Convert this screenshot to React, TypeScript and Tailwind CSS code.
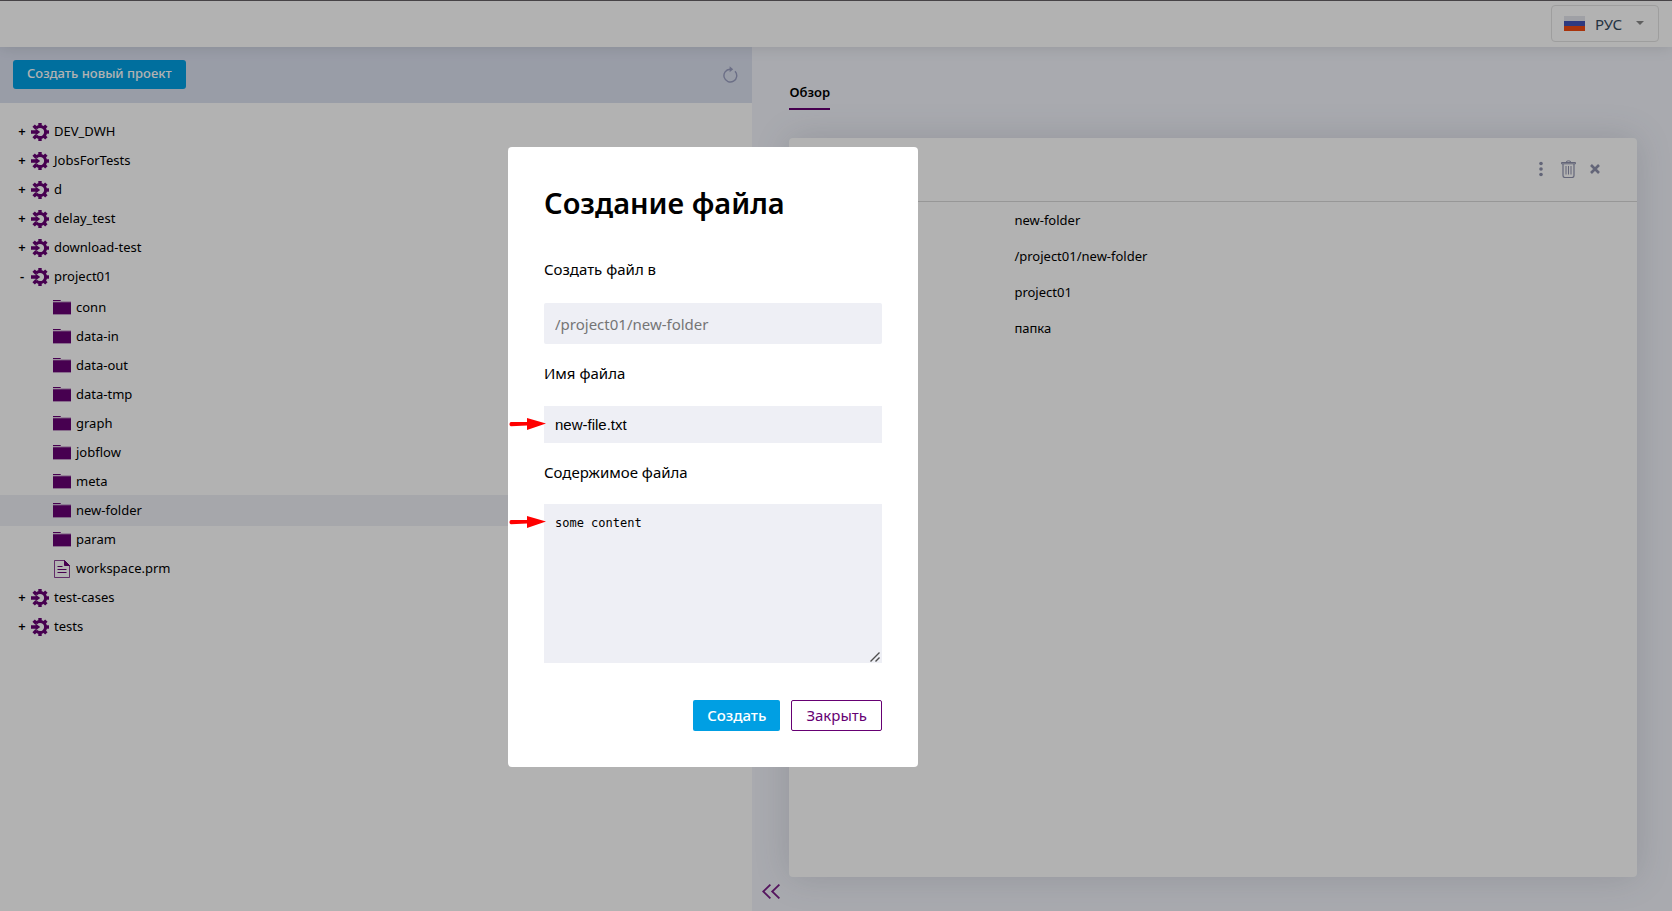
import { useState } from 'react';

type TreeNode = {
  name: string;
  kind: 'project' | 'folder' | 'file';
  children?: TreeNode[];
};

const tree: TreeNode[] = [
  { name: 'DEV_DWH', kind: 'project' },
  { name: 'JobsForTests', kind: 'project' },
  { name: 'd', kind: 'project' },
  { name: 'delay_test', kind: 'project' },
  { name: 'download-test', kind: 'project' },
  {
    name: 'project01',
    kind: 'project',
    children: [
      { name: 'conn', kind: 'folder' },
      { name: 'data-in', kind: 'folder' },
      { name: 'data-out', kind: 'folder' },
      { name: 'data-tmp', kind: 'folder' },
      { name: 'graph', kind: 'folder' },
      { name: 'jobflow', kind: 'folder' },
      { name: 'meta', kind: 'folder' },
      { name: 'new-folder', kind: 'folder' },
      { name: 'param', kind: 'folder' },
      { name: 'workspace.prm', kind: 'file' },
    ],
  },
  { name: 'test-cases', kind: 'project' },
  { name: 'tests', kind: 'project' },
];

const details = ['new-folder', '/project01/new-folder', 'project01', 'папка'];

function GearIcon() {
  return (
    <svg viewBox="0 0 18 18" className="size-[18px] shrink-0" fill="#660073" aria-hidden="true">
      {[0, 45, 90, 135, 180, 225, 315].map((a) => (
        <rect key={a} x="7.3" y="0" width="3.4" height="4" transform={`rotate(${a} 9 9)`} />
      ))}
      <path d="M5 5.1A5.6 5.6 0 1 1 5 12.9" fill="none" stroke="#660073" strokeWidth="3" />
      <path d="M0 7.3h4.6V5.4L9.2 9l-4.6 3.6v-1.9H0z" />
    </svg>
  );
}

function FolderIcon() {
  return (
    <svg viewBox="0 0 18 15" className="h-[15px] w-[18px] shrink-0" fill="#660073" aria-hidden="true">
      <path d="M0 0h7.4l.6 1H0zM0 2.3h18V14H0z" />
      <path d="M0 1h8v1.3H0z" opacity=".2" />
      <path d="M8 1.6h10v.7H8zM0 14h18v.8H0z" opacity=".5" />
    </svg>
  );
}

function FileIcon() {
  return (
    <svg viewBox="0 0 18 18" className="size-[18px] shrink-0" fill="none" stroke="#660073" aria-hidden="true">
      <path d="M11.5.5h-10v17h15V5.5z" strokeOpacity=".75" />
      <path d="M11.5.5v5h5z" fill="#660073" />
      <path d="M4.5 6.5h5M4.5 9.5h9M4.5 12.5h9" strokeWidth="1.2" />
    </svg>
  );
}

function TreeRow({ node, selected }: { node: TreeNode; selected?: boolean }) {
  if (node.kind === 'project') {
    return (
      <button type="button" className="flex h-[29px] w-full items-center pl-[18px] text-left">
        <span className="mr-[5px] w-2 text-center font-semibold">{node.children ? '-' : '+'}</span>
        <GearIcon />
        <span className="pl-[5px]">{node.name}</span>
      </button>
    );
  }
  return (
    <button
      type="button"
      className={
        selected
          ? '-my-px flex h-[31px] w-full items-center bg-[#eeeff5] pl-[53px] text-left'
          : 'flex h-[29px] w-full items-center pl-[53px] text-left'
      }
    >
      {node.kind === 'folder' ? <FolderIcon /> : <FileIcon />}
      <span className="pl-[5px]">{node.name}</span>
    </button>
  );
}

function Sidebar() {
  return (
    <aside className="flex w-[45%] shrink-0 flex-col bg-white">
      <div className="flex h-14 items-center justify-between bg-[#dce1f0] pr-[14px] pb-[2px] pl-[13px]">
        <button type="button" className="h-[29px] rounded-[3px] bg-[#009fe3] px-[14px] text-[13px] font-medium text-white">
          Создать новый проект
        </button>
        <button type="button" aria-label="Обновить">
          <svg viewBox="0 0 16 17" className="h-[17px] w-4" fill="none" stroke="#9a9fc0" strokeWidth="1.4" aria-hidden="true">
            <path d="M13 5.2A6.4 6.4 0 1 1 8 3.2" />
            <path d="M7.6.2 11.2 3.2 7.6 6.2z" fill="#9a9fc0" stroke="none" />
          </svg>
        </button>
      </div>
      <ul className="pt-[14px] text-[13px] text-black">
        {tree.map((node) => (
          <li key={node.name}>
            <TreeRow node={node} />
            {node.children && (
              <ul className="pt-[2px]">
                {node.children.map((child) => (
                  <li key={child.name}>
                    <TreeRow node={child} selected={child.name === 'new-folder'} />
                  </li>
                ))}
              </ul>
            )}
          </li>
        ))}
      </ul>
    </aside>
  );
}

function Overview() {
  return (
    <main className="relative flex grow flex-col pt-9 pr-[35px] pb-[34px] pl-[37px]">
      <nav className="flex">
        <a href="#overview" className="border-b-2 border-[#660073] pb-[7px] text-[13px] leading-[18px] font-semibold text-black">
          Обзор
        </a>
      </nav>
      <section className="mt-7 grow rounded-[4px] bg-white shadow-[0_0_36px_rgba(60,60,80,0.16)]">
        <div className="flex h-16 items-center justify-end gap-[18px] border-b border-[#d9d9d9] pr-[37px] pb-[2px] text-[#8e91ad]">
          <button type="button" aria-label="Ещё">
            <svg viewBox="0 0 4 16" className="h-4 w-1" fill="currentColor" aria-hidden="true">
              <circle cx="2" cy="2.5" r="1.8" />
              <circle cx="2" cy="8" r="1.8" />
              <circle cx="2" cy="13.5" r="1.8" />
            </svg>
          </button>
          <button type="button" aria-label="Удалить">
            <svg viewBox="0 0 15 18" className="h-[18px] w-[15px]" fill="none" stroke="currentColor" aria-hidden="true">
              <path d="M.5 2.5h14v1.3H.5zM5 2.2C5 .4 10 .4 10 2.2" />
              <path d="M2 4v11.5q0 2 2 2h7q2 0 2-2V4" strokeWidth="1.2" />
              <path d="M5 6v8.5M7.5 6v8.5M10 6v8.5" />
            </svg>
          </button>
          <button type="button" aria-label="Закрыть панель" className="-ml-1">
            <svg viewBox="0 0 10 10" className="size-[10px]" stroke="currentColor" strokeWidth="2.6" aria-hidden="true">
              <path d="m1 1 8 8M9 1 1 9" />
            </svg>
          </button>
        </div>
        <ul className="pt-px pl-[225px] text-[13px] text-black">
          {details.map((value) => (
            <li key={value} className="flex h-9 items-center">
              {value}
            </li>
          ))}
        </ul>
      </section>
      <button type="button" aria-label="Свернуть" className="absolute bottom-3 left-[10px]">
        <svg viewBox="0 0 18 15" className="h-[15px] w-[18px]" fill="none" stroke="#7a1f87" strokeWidth="1.8" aria-hidden="true">
          <path d="M8.4.6 1.2 7.5l7.2 6.9M17.4.6l-7.2 6.9 7.2 6.9" />
        </svg>
      </button>
    </main>
  );
}

function Arrow() {
  return (
    <svg viewBox="0 0 38 12" className="absolute top-3 -left-[35px] h-3 w-[38px]" fill="#f00" aria-hidden="true">
      <path d="M2 4h16V0l19 5.5L18 12V7.6L2 8.2C0 8 0 4.4 2 4z" />
    </svg>
  );
}

function CreateFileDialog() {
  const [name, setName] = useState('new-file.txt');
  const [content, setContent] = useState('some content');

  return (
    <div className="fixed inset-0 z-20 flex items-center bg-black/30 pt-[3px] pl-[508px]">
      <form
        role="dialog"
        aria-labelledby="dialog-title"
        className="w-[410px] rounded-[4px] bg-white p-9 text-[15px] leading-5 text-black"
        onSubmit={(e) => e.preventDefault()}
      >
        <h1 id="dialog-title" className="text-[29px] leading-10 font-semibold">
          Создание файла
        </h1>

        <label htmlFor="path" className="mt-9 block">
          Создать файл в
        </label>
        <input
          id="path"
          disabled
          value="/project01/new-folder"
          className="mt-6 block h-[41px] w-full rounded-[2px] bg-[#eeeff5] px-[11px] text-[#757575]"
        />

        <label htmlFor="name" className="mt-[19px] block">
          Имя файла
        </label>
        <div className="relative mt-[23px]">
          <input
            id="name"
            value={name}
            onChange={(e) => setName(e.target.value)}
            className="block h-[37px] w-full bg-[#eeeff5] px-[11px] font-['Liberation_Sans',Arial,sans-serif] text-[15px]"
          />
          <Arrow />
        </div>

        <label htmlFor="content" className="mt-[19px] block">
          Содержимое файла
        </label>
        <div className="relative mt-[22px]">
          <textarea
            id="content"
            value={content}
            onChange={(e) => setContent(e.target.value)}
            className="block h-[159px] w-full resize-none bg-[#eeeff5] px-[11px] py-[10px] font-['DejaVu_Sans_Mono',monospace] text-xs leading-[18px]"
          />
          <svg
            viewBox="0 0 10 10"
            className="pointer-events-none absolute right-[2px] bottom-px size-[10px]"
            stroke="#4d4d4d"
            strokeWidth="1.4"
            aria-hidden="true"
          >
            <path d="M.5 9.5l9-9M5.5 9.5l4-4" />
          </svg>
          <Arrow />
        </div>

        <div className="mt-[37px] flex justify-end gap-[11px]">
          <button type="submit" className="h-[31px] rounded-[2px] bg-[#009fe3] px-[14px] pb-px font-medium text-white">
            Создать
          </button>
          <button type="button" className="h-[31px] rounded-[2px] border border-[#660073] px-[14px] pb-px text-[#660073]">
            Закрыть
          </button>
        </div>
      </form>
    </div>
  );
}

export default function App() {
  return (
    <div className="flex min-h-screen flex-col border-t border-[#6b666b] bg-[#f2f4fb] font-['Noto_Sans',sans-serif]">
      <header className="relative z-10 flex h-[46px] items-center justify-end bg-white pr-[13px] pb-px shadow-[0_0_16px_rgba(0,0,0,0.12)]">
        <button
          type="button"
          className="flex h-[37px] w-[108px] items-center rounded-[4px] border border-[#e3e3e3] pl-3 text-[15px] text-[#34495e]"
        >
          <svg viewBox="0 0 21 15" className="h-[15px] w-[21px]" aria-hidden="true">
            <path d="M0 0h21v5H0z" fill="#e4e6ec" />
            <path d="M0 5h21v5H0z" fill="#4353b8" />
            <path d="M0 10h21v5H0z" fill="#f24a10" />
          </svg>
          <span className="pt-px pl-[10px]">РУС</span>
          <svg viewBox="0 0 8 4" className="mb-px ml-[14px] h-1 w-2" fill="#888" aria-hidden="true">
            <path d="M0 0h8L4 4z" />
          </svg>
        </button>
      </header>
      <div className="flex grow">
        <Sidebar />
        <Overview />
      </div>
      <CreateFileDialog />
    </div>
  );
}
